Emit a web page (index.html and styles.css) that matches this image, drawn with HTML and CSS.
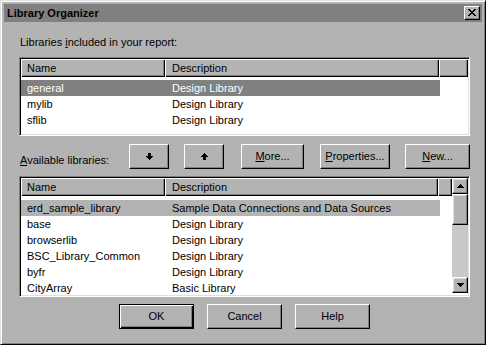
FILE: index.html
```html
<!DOCTYPE html>
<html lang="en">

<head>
    <meta charset="UTF-8">
    <title>Library Organizer</title>
    <link rel="stylesheet" href="styles.css">
</head>

<body>
    <div class="dialog">
        <div class="titlebar">
            <span class="title">Library Organizer</span>
            <button class="btn close-btn" aria-label="Close">
                <svg width="8" height="7" viewBox="0 0 8 7" shape-rendering="crispEdges">
                    <path d="M0 0h2v1h-2zM6 0h2v1h-2zM1 1h2v1h-2zM5 1h2v1h-2zM2 2h4v1h-4zM3 3h2v1h-2zM2 4h4v1h-4zM1 5h2v1h-2zM5 5h2v1h-2zM0 6h2v1h-2zM6 6h2v1h-2z" fill="#000" />
                </svg>
            </button>
        </div>
        <div class="content">
            <p class="caption">Libraries <u>i</u>ncluded in your report:</p>
            <div class="listview list-top">
                <div class="lv-head">
                    <div class="hcell col-name">Name</div>
                    <div class="hcell col-desc">Description</div>
                    <div class="hcell col-rest"></div>
                </div>
                <div class="lv-rows">
                    <div class="row selected"><span class="c-name">general</span><span class="c-desc">Design Library</span></div>
                    <div class="row"><span class="c-name">mylib</span><span class="c-desc">Design Library</span></div>
                    <div class="row"><span class="c-name">sflib</span><span class="c-desc">Design Library</span></div>
                </div>
            </div>

            <div class="toolbar">
                <span class="caption toolbar-label"><u>A</u>vailable libraries:</span>
                <button class="btn arrow-btn">
                    <svg width="7" height="7" viewBox="0 0 7 7" shape-rendering="crispEdges">
                        <path d="M2 0h3v3h-3zM0 3h7v1h-7zM1 4h5v1h-5zM2 5h3v1h-3zM3 6h1v1h-1z" fill="#000" />
                    </svg>
                </button>
                <button class="btn arrow-btn up-btn">
                    <svg width="7" height="7" viewBox="0 0 7 7" shape-rendering="crispEdges">
                        <path d="M3 0h1v1h-1zM2 1h3v1h-3zM1 2h5v1h-5zM0 3h7v1h-7zM2 4h3v3h-3z" fill="#000" />
                    </svg>
                </button>
                <button class="btn more-btn"><u>M</u>ore...</button>
                <button class="btn props-btn"><u>P</u>roperties...</button>
                <button class="btn new-btn"><u>N</u>ew...</button>
            </div>

            <div class="listview list-bottom">
                <div class="lv-main">
                    <div class="lv-head">
                        <div class="hcell col-name">Name</div>
                        <div class="hcell col-desc narrow">Description</div>
                        <div class="hcell col-rest"></div>
                    </div>
                    <div class="lv-rows">
                        <div class="row current"><span class="c-name">erd_sample_library</span><span class="c-desc">Sample Data Connections and Data Sources</span></div>
                        <div class="row"><span class="c-name">base</span><span class="c-desc">Design Library</span></div>
                        <div class="row"><span class="c-name">browserlib</span><span class="c-desc">Design Library</span></div>
                        <div class="row"><span class="c-name">BSC_Library_Common</span><span class="c-desc">Design Library</span></div>
                        <div class="row"><span class="c-name">byfr</span><span class="c-desc">Design Library</span></div>
                        <div class="row"><span class="c-name">CityArray</span><span class="c-desc">Basic Library</span></div>
                    </div>
                </div>
                <div class="scrollbar">
                    <div class="btn sb-btn">
                        <svg width="7" height="4" viewBox="0 0 7 4" shape-rendering="crispEdges">
                            <path d="M3 0h1v1h-1zM2 1h3v1h-3zM1 2h5v1h-5zM0 3h7v1h-7z" fill="#000" />
                        </svg>
                    </div>
                    <div class="btn sb-thumb"></div>
                    <div class="sb-track"></div>
                    <div class="btn sb-btn">
                        <svg width="7" height="4" viewBox="0 0 7 4" shape-rendering="crispEdges">
                            <path d="M0 0h7v1h-7zM1 1h5v1h-5zM2 2h3v1h-3zM3 3h1v1h-1z" fill="#000" />
                        </svg>
                    </div>
                </div>
            </div>

            <div class="actions">
                <button class="btn action-btn default">OK</button>
                <button class="btn action-btn">Cancel</button>
                <button class="btn action-btn">Help</button>
            </div>
        </div>
    </div>
</body>

</html>
```

FILE: styles.css
```css
html,
body {
    margin: 0;
}

body {
    font-family: "Liberation Sans", Arial, sans-serif;
    font-size: 11px;
    line-height: 13px;
    color: #000;
    background: #b3b3b3;
}

.dialog {
    width: 486px;
    height: 345px;
    box-sizing: border-box;
    background: #b3b3b3;
    border: 1px solid;
    border-color: #dfdfdf #000 #000 #dfdfdf;
    box-shadow: inset 1px 1px #fff, inset -1px -1px #808080;
    padding: 3px;
    display: flex;
    flex-direction: column;
}

/* title bar */
.titlebar {
    height: 18px;
    flex: none;
    background: #808080;
    display: flex;
    align-items: center;
    justify-content: space-between;
    padding: 0 2px 0 3px;
}

.title {
    font-weight: bold;
}

/* generic raised button */
.btn {
    font: inherit;
    color: #000;
    background: #b3b3b3;
    box-sizing: border-box;
    padding: 0;
    border: 1px solid;
    border-color: #fff #000 #000 #fff;
    box-shadow: inset -1px -1px #808080;
    display: flex;
    align-items: center;
    justify-content: center;
}

.close-btn {
    width: 16px;
    height: 14px;
    padding-bottom: 1px;
}

.content {
    flex: 1;
    padding: 14px 12px 0 15px;
}

.caption {
    margin: 0 0 8px 1px;
}

/* list views */
.listview {
    background: #fff;
    box-sizing: border-box;
    border: 1px solid;
    border-color: #808080 #fff #fff #808080;
    box-shadow: inset 1px 1px #000, inset -1px -1px #dfdfdf;
    padding: 1px;
    overflow: hidden;
}

.list-top {
    height: 79px;
}

.lv-head {
    display: flex;
    height: 18px;
}

.hcell {
    box-sizing: border-box;
    background: #b3b3b3;
    box-shadow: inset 1px 1px #fff, inset -1px -1px #000, inset -2px -2px #808080;
    padding: 0 0 0 6px;
    line-height: 18px;
    white-space: nowrap;
}

.col-name {
    width: 144px;
}

.col-desc {
    width: 274px;
    padding-left: 7px;
}

.col-desc.narrow {
    width: 273px;
}

.col-rest {
    flex: 1;
}

.lv-rows {
    padding-top: 3px;
}

.row {
    display: flex;
    width: 419px;
    height: 16px;
    line-height: 16px;
    white-space: nowrap;
}

.c-name {
    width: 144px;
    box-sizing: border-box;
    padding-left: 6px;
}

.c-desc {
    padding-left: 7px;
}

.row.selected {
    background: #808080;
    color: #fff;
}

.row.current {
    background: #b3b3b3;
}

/* toolbar between the lists */
.toolbar {
    display: flex;
    align-items: flex-start;
    height: 25px;
    margin: 8px 0 7px;
}

.toolbar-label {
    width: 109px;
    margin: 10px 0 0 1px;
}

.toolbar .btn {
    height: 25px;
}

.arrow-btn {
    width: 40px;
}

.up-btn {
    margin-left: 15px;
}

.more-btn {
    width: 63px;
    margin-left: 17px;
}

.props-btn {
    width: 70px;
    margin-left: 16px;
}

.new-btn {
    width: 65px;
    margin-left: 15px;
}

.list-bottom {
    height: 121px;
    display: flex;
    align-items: flex-start;
}

.list-bottom .lv-rows {
    padding-top: 4px;
}

.lv-main {
    flex: 1;
    min-width: 0;
}

.scrollbar {
    width: 16px;
    height: 115px;
    display: flex;
    flex-direction: column;
}

.sb-btn {
    height: 16px;
    flex: none;
    box-shadow: inset -1px -1px #808080, inset 1px 1px #dfdfdf;
}

.sb-thumb {
    height: 31px;
    flex: none;
    box-shadow: inset -1px -1px #808080, inset 1px 1px #dfdfdf;
}

.sb-track {
    flex: 1;
    background: #c8c8c8;
}

/* bottom buttons */
.actions {
    display: flex;
    justify-content: center;
    gap: 13px;
    margin-top: 7px;
}

.action-btn {
    width: 75px;
    height: 25px;
}

.action-btn.default {
    border-color: #000;
    box-shadow: inset 1px 1px #fff, inset -1px -1px #000, inset -2px -2px #808080;
}
```
